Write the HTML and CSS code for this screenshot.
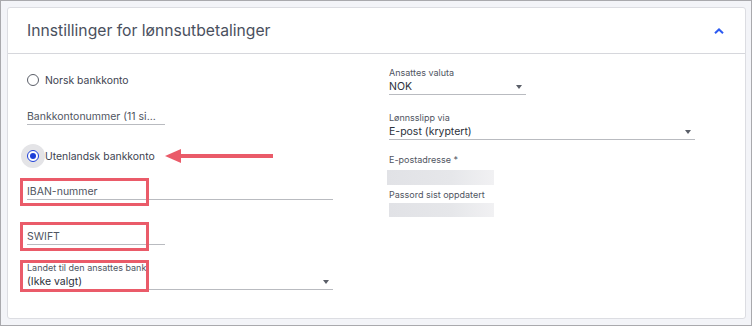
FILE: index.html
```html
<!DOCTYPE html>
<html lang="no">
<head>
<meta charset="utf-8">
<title>Innstillinger for lønnsutbetalinger</title>
<link rel="stylesheet" href="styles.css">
</head>
<body>
<div class="card">
  <div class="card-header">
    <h2 class="card-title">Innstillinger for lønnsutbetalinger</h2>
    <svg class="chevron" width="10" height="6" viewBox="0 0 10 6"><polyline points="1,5.2 5,1.4 9,5.2" fill="none" stroke="#2d5bf2" stroke-width="2"/></svg>
  </div>
  <div class="card-body">
    <div class="col-left">
      <div class="radio-row r1">
        <span class="radio-hit"><span class="radio"></span></span>
        <span class="radio-label">Norsk bankkonto</span>
      </div>
      <div class="field f-bank"><span class="placeholder">Bankkontonummer (11 si...</span></div>
      <div class="radio-row r2">
        <span class="radio-hit active"><span class="radio checked"></span></span>
        <span class="radio-label">Utenlandsk bankkonto</span>
        <svg class="arrow" width="108" height="14" viewBox="0 0 108 14"><polygon points="0,7 16,0 16,14" fill="#ea5b69"/><rect x="14" y="5" width="94" height="4" fill="#ea5b69"/></svg>
      </div>
      <div class="field f-iban"><span class="placeholder">IBAN-nummer</span><span class="annot a-iban"></span></div>
      <div class="field f-swift"><span class="placeholder">SWIFT</span><span class="annot a-swift"></span></div>
      <div class="select-group f-land">
        <div class="small-label">Landet til den ansattes bank</div>
        <div class="field select"><span class="value">(Ikke valgt)</span><span class="caret"></span></div>
        <span class="annot a-land"></span>
      </div>
    </div>
    <div class="col-right">
      <div class="select-group g-valuta">
        <div class="small-label">Ansattes valuta</div>
        <div class="field select w-short"><span class="value">NOK</span><span class="caret"></span></div>
      </div>
      <div class="select-group g-slipp">
        <div class="small-label">Lønnsslipp via</div>
        <div class="field select w-long"><span class="value">E-post (kryptert)</span><span class="caret"></span></div>
      </div>
      <div class="readonly g-email">
        <div class="small-label">E-postadresse *</div>
        <div class="blur b-email"></div>
      </div>
      <div class="readonly g-pass">
        <div class="small-label">Passord sist oppdatert</div>
        <div class="blur b-pass"></div>
      </div>
    </div>
  </div>
</div>
</body>
</html>
```
FILE: styles.css
```css
* { box-sizing: border-box; }
html, body { margin: 0; }
body {
  width: 752px;
  height: 326px;
  background: #f3f4f8;
  border: 1px solid #a9a9ad;
  padding: 6px 5px 6px 6px;
  font-family: Inter, "Noto Sans", sans-serif;
  color: #3d4350;
  overflow: hidden;
}
.card {
  background: #fff;
  border: 1px solid #dcdde2;
  border-radius: 3px;
  height: 312px;
}
.card-header {
  height: 46px;
  border-bottom: 1px solid #d6d7dc;
  display: flex;
  align-items: center;
  justify-content: space-between;
  padding: 0 21px 0 19px;
}
.card-title {
  margin: 0;
  font-size: 15.7px;
  font-weight: 400;
  color: #4a505e;
}
.chevron { display: block; margin-top: 1px; }
.card-body {
  display: grid;
  grid-template-columns: 362px 1fr;
  padding-left: 19px;
}
.col-left, .col-right { display: flex; flex-direction: column; align-items: flex-start; }

.radio-row { display: flex; align-items: center; margin-left: -6px; height: 24px; }
.r1 { margin-top: 14px; }
.r2 { margin-top: 19px; }
.radio-hit {
  width: 24px; height: 24px; border-radius: 50%;
  display: flex; align-items: center; justify-content: center;
}
.radio-hit.active { background: #e4e4e7; }
.radio {
  width: 12px; height: 12px; border-radius: 50%;
  border: 1px solid #5a5e68; background: #fff;
  display: flex; align-items: center; justify-content: center;
}
.radio.checked { border: 1.5px solid #1d3fd8; }
.radio.checked::after {
  content: ""; width: 6px; height: 6px; border-radius: 50%; background: #1d3fd8;
}
.radio-label { font-size: 10.4px; color: #3d4350; width: 109px; white-space: nowrap; }
.arrow { margin-left: 11px; display: block; }

.field {
  position: relative;
  display: flex;
  align-items: center;
  height: 15px;
  border-bottom: 1px solid #b9bbc0;
  font-size: 10.5px;
  line-height: 14px;
}
.placeholder { color: #50555f; white-space: nowrap; }
.value { color: #2c313b; }
.f-bank { width: 138px; margin-top: 18px; }
.f-iban { width: 306px; margin-top: 17px; }
.f-swift { width: 138px; margin-top: 30px; }
.select-group { position: relative; }
.f-land { margin-top: 17px; }
.f-land .field { width: 306px; }
.small-label { font-size: 9px; line-height: 11px; color: #50555f; margin-bottom: 2px; }
.caret {
  margin-left: auto; margin-right: 4px;
  width: 0; height: 0;
  border-left: 3.5px solid transparent;
  border-right: 3.5px solid transparent;
  border-top: 4px solid #5a5e68;
}

.annot {
  position: absolute;
  left: -7px;
  width: 129px;
  border: 3px solid #ea5b69;
}
.a-iban { top: -7px; height: 28px; }
.a-swift { top: -8px; height: 29px; }
.a-land { top: -2px; height: 32px; }

.g-valuta { margin-top: 13px; }
.w-short { width: 137px; }
.g-slipp { margin-top: 17px; }
.w-long { width: 306px; }
.readonly .small-label { margin-bottom: 5px; }
.g-email { margin-top: 14px; }
.g-pass { margin-top: 4px; }
.g-pass .small-label { margin-bottom: 3px; }
.blur { background: linear-gradient(90deg, #e1e2e6 0%, #e6e7ea 60%, #f1f1f3 100%); }
.b-email { width: 107px; height: 15px; margin-left: -2px; }
.b-pass { width: 105px; height: 14px; }
```
